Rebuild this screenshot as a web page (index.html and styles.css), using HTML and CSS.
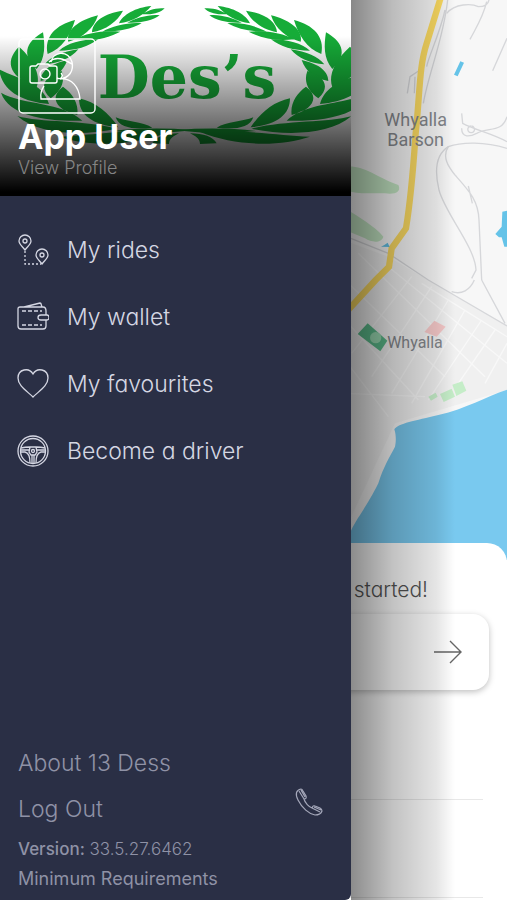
FILE: index.html
```
<!DOCTYPE html>
<html lang="en">
<head>
    <meta charset="UTF-8">
    <meta name="viewport" content="width=device-width, initial-scale=1.0">
    <title>13 Dess</title>
    <link rel="stylesheet" href="styles.css">
</head>
<body>
<main class="screen">
    <!-- Map -->
    <svg class="map" viewBox="0 0 1521 1680" preserveAspectRatio="xMaxYMin slice" role="img" aria-label="Map of Whyalla">
        <g transform="translate(1035 0)" fill="none">
            <path d="M-20 715L130 770 300 870 486 975V1170L150 1270 0 1590H-20Z" fill="#f0f0f0"/>
            <g stroke="#f8f8f8" stroke-width="4">
                <path d="M0 840L300 1130M40 760L420 1130M130 800L486 1090M230 850L486 1010M0 960L220 1200M0 1080L130 1250M0 1180L240 1190"/>
                <path d="M130 790L0 930M200 830L20 1060M260 860L80 1130M310 900L140 1180M360 930L200 1210M410 960L250 1200M450 990L340 1150M486 1030L420 1150"/>
            </g>
            <path d="M0 500C60 495 90 530 160 555C170 575 150 585 120 580C80 578 40 585 0 570Z" fill="#c5e8c5"/>
            <path d="M0 625C40 650 90 680 115 710C110 730 80 728 60 715L0 690Z" fill="#c5e8c5"/>
            <g stroke="#d6d7da" stroke-width="4">
                <path d="M308 0C295 120 250 220 235 310M300 30C285 100 250 170 245 200M225 210L195 230 187 280M210 230L208 280"/>
                <path d="M305 40C330 10 380 10 400 20C420 20 430 10 432 0M425 5C415 50 395 80 375 118M486 115L443 212"/>
                <path d="M350 340L353 370C390 390 440 400 486 425M350 385C350 415 375 410 395 400C430 380 470 400 486 350M378 378A10 10 0 1 0 379 378"/>
                <path d="M486 445C420 425 350 425 310 440C270 465 270 520 282 570C300 640 390 740 393 810L380 835"/>
                <path d="M310 440C290 470 310 500 330 525C370 570 400 600 402 660L410 840M370 558L382 610"/>
                <path d="M10 712L130 760 250 840 486 978M320 875C350 885 375 870 388 840M410 840L480 970"/>
            </g>
            <path d="M288 -10L245 130C222 200 225 280 212 400C205 500 200 580 183 685L140 745 132 800 92 840 0 940" stroke="#fddc62" stroke-width="19"/>
            <path d="M346 184L357 188 338 229 327 224ZM118 735L128 728 134 741 108 740ZM472 635L500 630V740H478L470 712 462 712 451 702 470 680Z" fill="#65c3e8"/>
            <path d="M68 970L127 1022 106 1054 38 1002Z" fill="#5cbb8b"/>
            <circle cx="92" cy="1013" r="17" fill="#9bdcb4"/>
            <path d="M268 962L302 980 275 1010 238 996Z" fill="#f6c9c9"/>
            <path d="M250 1190L272 1178 278 1190 258 1202ZM285 1182L320 1166 330 1190 296 1206ZM322 1154L352 1144 364 1172 334 1188Z" fill="#c5edc8"/>
            <path d="M500 1165C430 1185 370 1225 280 1245C210 1262 160 1270 148 1288C155 1310 152 1330 150 1340C135 1370 115 1400 100 1450C60 1530 30 1560 15 1600L0 1700H520Z" fill="#79c9ef"/>
            <g class="map-label">
                <text x="212" y="377">Whyalla</text>
                <text x="212" y="437">Barson</text>
                <text class="town" x="210" y="1043">Whyalla</text>
            </g>
        </g>
    </svg>

    <!-- Booking sheet -->
    <section class="sheet">
        <h2 class="sheet-title">Let's get started!</h2>
        <button class="destination" type="button" aria-label="Choose destination">
            <svg class="arrow" viewBox="0 0 28 24"><path d="M0 12H27M16 1L27 12 16 23"/></svg>
        </button>
        <ul class="places">
            <li></li>
            <li></li>
        </ul>
    </section>
</main>

<!-- Side menu -->
<aside class="drawer">
    <header class="profile">
        <svg class="logo" viewBox="0 0 351 196" preserveAspectRatio="xMidYMin slice" role="img" aria-label="Des's">
            <defs>
                <g id="branch">
                    <path d="M143 18C190 22 230 45 240 70C200 65 165 45 143 18ZM103 25C130 22 155 32 170 42C140 46 115 38 103 25ZM118 46C150 42 190 55 215 68C175 70 140 62 118 46Z"/>
                    <path d="M228 32C285 40 320 65 321 97C280 90 245 65 228 32ZM172 70C210 66 260 78 290 95C245 96 205 88 172 70Z"/>
                    <path d="M303 46C360 60 400 90 392 125C350 115 315 85 303 46ZM236 95C290 90 340 100 372 118C320 125 275 115 236 95Z"/>
                    <path d="M372 60C430 75 465 110 454 162C410 145 385 105 372 60ZM303 118C355 118 395 130 420 152C370 152 330 140 303 118Z"/>
                    <path d="M468 97C510 120 540 160 487 207C460 175 462 135 468 97ZM362 148C410 155 445 170 463 193C420 190 385 175 362 148Z"/>
                    <path d="M540 140C490 185 475 230 487 262C560 235 590 190 540 140ZM395 180C440 190 475 210 475 243C430 235 408 215 395 180Z"/>
                    <path d="M600 208C540 240 470 245 450 312C530 305 590 275 600 208ZM412 213C460 225 485 260 445 295C415 275 400 245 412 213Z"/>
                    <path d="M594 278C530 315 410 305 350 362C450 365 570 350 594 278ZM408 260C450 290 430 330 365 345C360 310 380 280 408 260Z"/>
                    <path d="M545 348C480 368 340 360 245 386C350 408 480 405 545 348ZM360 295C360 345 320 375 242 382C270 340 310 305 360 295Z"/>
                    <path d="M420 410C330 408 240 388 90 396C200 440 330 440 420 410ZM250 352C240 385 190 390 140 383C170 365 220 365 250 352Z"/>
                    <path d="M20 390C100 384 180 384 260 393L180 400C100 399 60 396 20 390ZM60 400C100 400 130 410 140 430L90 432C90 415 75 408 60 400Z"/>
                </g>
            </defs>
            <g fill="#16ac38">
                <use href="#branch" transform="translate(170 0) scale(.3333)"/>
                <use href="#branch" transform="translate(199 0) scale(-.3333 .3333)"/>
                <text class="logo-text" x="187" y="98">Des’s</text>
            </g>
        </svg>
        <div class="profile-info">
            <svg class="avatar" viewBox="0 0 78 76">
                <rect x="1" y="1" width="76" height="74" rx="4"/>
                <path d="M14 28H18L20 26H30L32 28H37Q39 28 39 30V43Q39 45 37 45H14Q12 45 12 43V30Q12 28 14 28Z"/>
                <circle cx="27" cy="36" r="5"/>
                <path d="M33 24C35 13 50 12 54 24C56 33 51 40 42 41C54 40 61 49 62 61H23C22 54 24 51 26 48M31 24C39 17 47 22 54 26M39 40C43 42 46 38 43 35"/>
            </svg>
            <h1 class="name">App User</h1>
            <a class="view-profile" href="#">View Profile</a>
        </div>
    </header>

    <nav class="menu">
        <a class="menu-item" href="#">
            <svg class="icon" viewBox="0 0 32 32">
                <path d="M8 16C5 12 2 10 2 7A6 6 0 0 1 14 7C14 10 11 12 8 16ZM25 30C22 26 19 24 19 21A6 6 0 0 1 31 21C31 24 28 26 25 30Z"/>
                <circle cx="8" cy="7" r="2"/>
                <circle cx="25" cy="21" r="2"/>
                <path d="M8 17V30H24" stroke-dasharray="2 2"/>
            </svg>
            My rides
        </a>
        <a class="menu-item" href="#">
            <svg class="icon" viewBox="0 0 32 32">
                <path d="M29 14V10Q29 6 26 6H3Q1 6 1 8V25Q1 28 4 28H26Q29 28 29 25V19M7 6L23 2Q24 2 24 3L25 6M30 14H24Q21 14 21 16.500T24 19H30Q32 19 32 16.500T30 14Z"/>
                <path d="M5 10H25M5 24H25" stroke-dasharray="4 2"/>
            </svg>
            My wallet
        </a>
        <a class="menu-item" href="#">
            <svg class="icon" viewBox="0 0 32 32">
                <path d="M16 29C10 23 1 18 1 10C1 1 12 -1 16 6C20 -1 31 1 31 10C31 18 22 23 16 29Z"/>
            </svg>
            My favourites
        </a>
        <a class="menu-item" href="#">
            <svg class="icon" viewBox="0 0 32 32">
                <circle cx="16" cy="16" r="15"/>
                <circle cx="16" cy="16" r="12.500"/>
                <circle cx="16" cy="16" r="1.500"/>
                <path d="M4 13C8 12 11 12 13 12H19C21 12 24 12 28 13M4 17H8Q13 18 13 28M28 17H24Q19 18 19 28M13 12L12 17 14 20H18L20 17 19 12M4 15H12M20 15H28M15 20V28M17 20V28"/>
            </svg>
            Become a driver
        </a>
    </nav>

    <footer class="drawer-footer">
        <div class="footer-links">
            <a class="footer-link" href="#">About 13 Dess</a>
            <a class="footer-link" href="#">Log Out</a>
            <p class="version"><b>Version:</b> 33.5.27.6462</p>
            <a class="requirements" href="#">Minimum Requirements</a>
        </div>
        <button class="call" type="button" aria-label="Call us">
            <svg class="phone" viewBox="0 0 28 28">
                <path d="M6 1C1 2 0 6 3 12C7 20 14 26 20 27C24 27 26 26 27 23Q27 21 25 20L20 18Q18 17 17 20C14 19 10 15 9 11Q12 11 11 8L8 3Q7 1 6 1ZM4 3L9 11M6 2L10 9M17 20L25 24M19 19L26 22"/>
            </svg>
        </button>
    </footer>
</aside>
</body>
</html>
```
FILE: styles.css
```
* {
    box-sizing: border-box;
}
body {
    margin: 0;
    min-height: 100vh;
    position: relative;
    overflow-x: hidden;
    background-color: #fff;
    font-family: Inter, "Open Sans", sans-serif;
    font-weight: 300;
    font-feature-settings: "cv11";
}
a {
    color: inherit;
    text-decoration: none;
}
button {
    border: none;
    padding: 0;
    cursor: pointer;
}

/* Map */
.screen {
    display: flex;
    flex-direction: column;
    min-height: 100vh;
}
.map {
    display: block;
    width: 100%;
    height: 560px;
    background-color: #f7f7f7;
}
.map-label {
    font-family: Roboto, sans-serif;
    font-size: 54px;
    font-weight: 400;
    text-anchor: middle;
    fill: #84878c;
    stroke: none;
}
.town {
    font-size: 48px;
}

/* Booking sheet */
.sheet {
    position: relative;
    flex: 1;
    margin-top: -17px;
    padding: 33px 18px 0;
    background-color: #fff;
    border-radius: 20px 20px 0 0;
}
.sheet-title {
    margin: 0 61px 10px 0;
    font-size: 21px;
    line-height: 28px;
    font-weight: 300;
    text-align: right;
    color: #555;
}
.destination {
    display: flex;
    align-items: center;
    justify-content: flex-end;
    width: 100%;
    height: 76px;
    padding: 0 27px;
    background-color: #fff;
    border-radius: 16px;
    box-shadow: 0 2px 6px rgba(0, 0, 0, 0.25);
}
.arrow {
    width: 28px;
    height: 24px;
    fill: none;
    stroke: #666;
    stroke-width: 1.4;
}
.places {
    list-style-type: none;
    margin: 12px 6px 0;
    padding: 0;
}
.places li {
    height: 98px;
    border-bottom: 1px solid #e8e8e8;
}

/* Side menu */
.drawer {
    position: absolute;
    top: 0;
    bottom: 0;
    left: 0;
    width: calc(100% - 156px);
    display: flex;
    flex-direction: column;
    background-color: #2a2f45;
    color: #d5d7e3;
    border-bottom-right-radius: 6px;
}
.drawer::after {
    content: "";
    position: absolute;
    top: 0;
    bottom: 0;
    left: 100%;
    width: 104px;
    background: linear-gradient(to right, rgba(0, 0, 0, 0.45), rgba(0, 0, 0, 0.24) 40%, rgba(0, 0, 0, 0.1) 82%, rgba(0, 0, 0, 0));
}

/* Profile */
.profile {
    display: grid;
    height: 196px;
    background-color: #fff;
    overflow: hidden;
}
.logo,
.profile-info {
    grid-area: 1 / 1;
}
.logo {
    width: 100%;
    height: 196px;
}
.logo-text {
    font-family: "DejaVu Serif", serif;
    font-size: 60px;
    font-weight: bold;
    text-anchor: middle;
}
.profile-info {
    z-index: 1;
    display: flex;
    flex-direction: column;
    align-items: flex-start;
    padding: 38px 18px 0;
    background: linear-gradient(to bottom, rgba(0, 0, 0, 0) 36px, #000 192px);
}
.avatar {
    width: 78px;
    height: 76px;
    fill: none;
    stroke: #fff;
    stroke-width: 1.4;
}
.name {
    margin: 3px 0 0;
    font-size: 34px;
    line-height: 40px;
    font-weight: 700;
    color: #fff;
}
.view-profile {
    font-size: 18px;
    line-height: 22px;
    color: #858585;
}

/* Menu */
.menu {
    display: flex;
    flex-direction: column;
    padding: 20px 17px;
}
.menu-item {
    display: flex;
    align-items: center;
    gap: 18px;
    height: 67px;
    font-size: 23px;
}
.icon {
    width: 32px;
    height: 32px;
    fill: none;
    stroke: #d5d7e3;
    stroke-width: 1.3;
}

/* Footer */
.drawer-footer {
    display: flex;
    justify-content: space-between;
    margin-top: auto;
    padding: 0 28px 6px 18px;
    color: #8f92a6;
}
.footer-links {
    display: flex;
    flex-direction: column;
}
.footer-link {
    font-size: 23px;
    line-height: 46px;
}
.version {
    margin: 2px 0 0;
    font-size: 17px;
    line-height: 30px;
}
.version b {
    font-weight: 500;
}
.requirements {
    font-size: 18px;
    line-height: 30px;
    font-weight: 400;
}
.call {
    align-self: flex-start;
    margin-top: 48px;
    background: none;
}
.phone {
    display: block;
    width: 28px;
    height: 28px;
    fill: none;
    stroke: #a5a8ba;
    stroke-width: 1.2;
}
```
